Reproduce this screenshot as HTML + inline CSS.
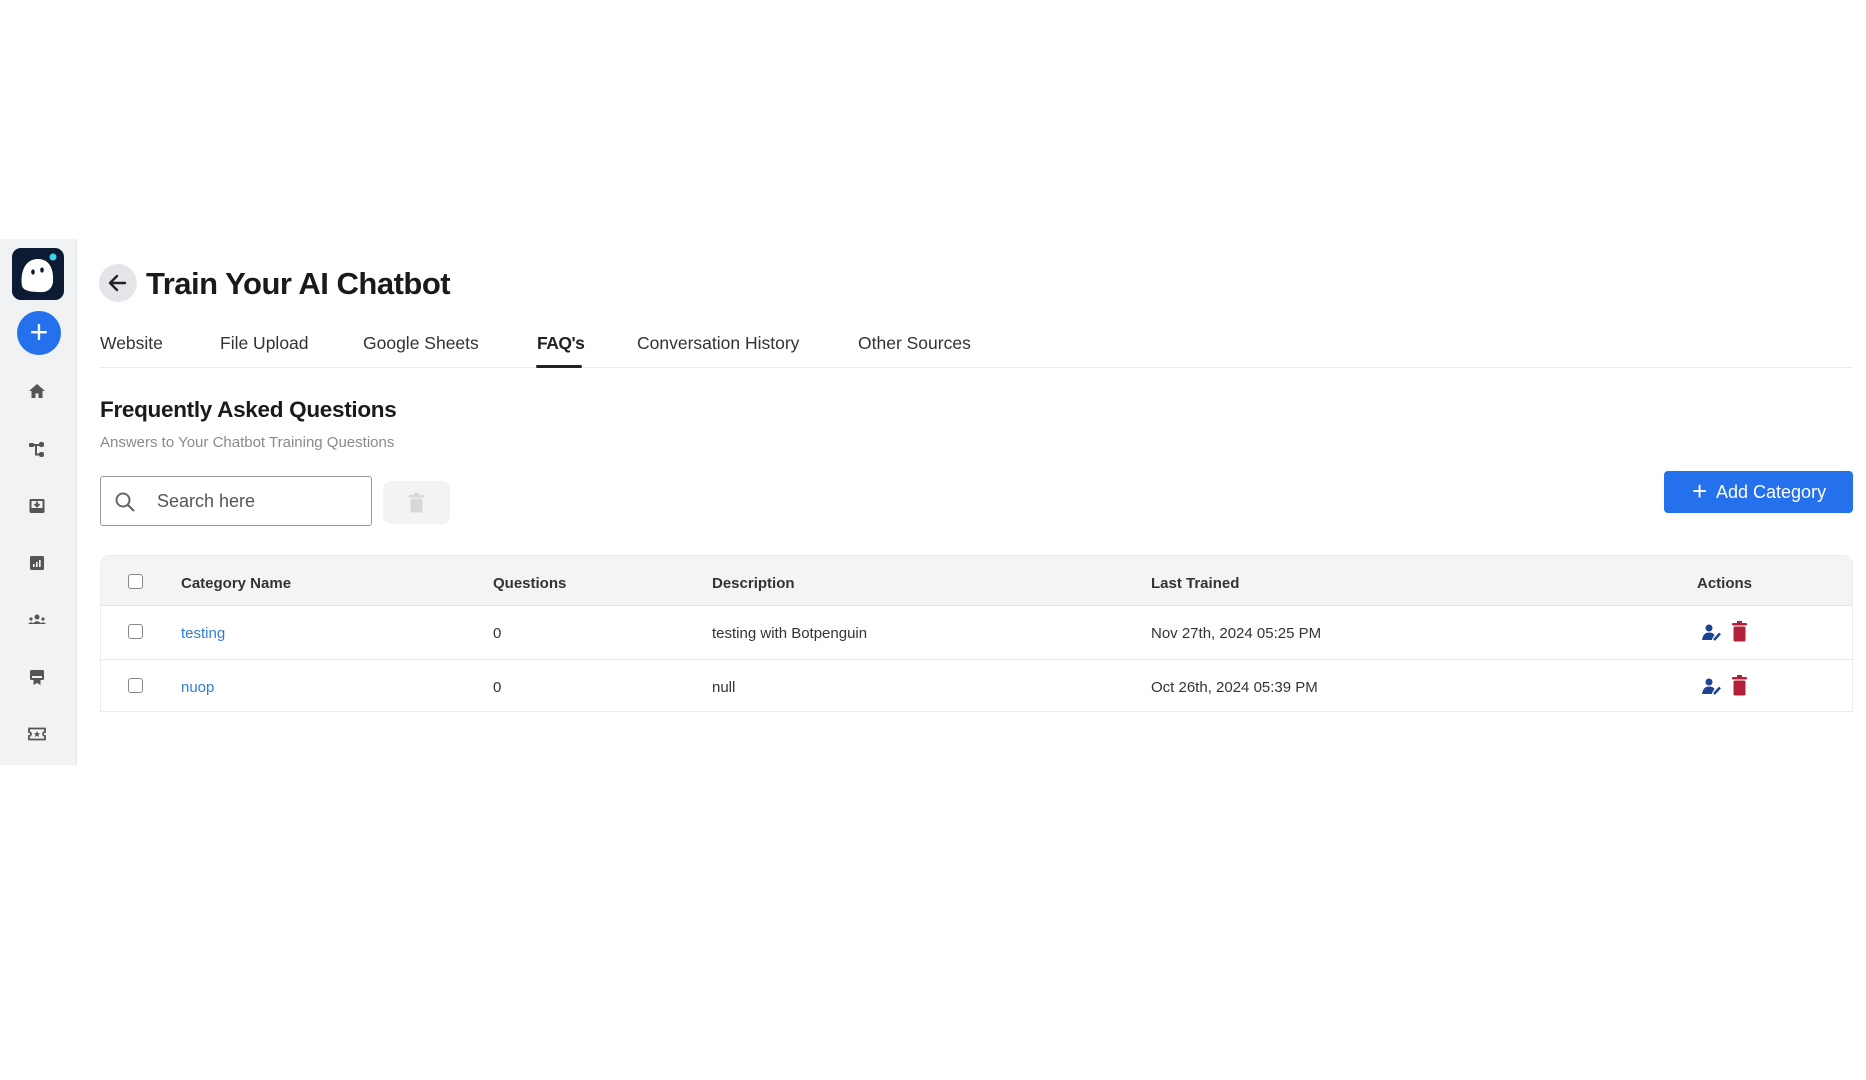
<!DOCTYPE html>
<html><head><meta charset="utf-8"><style>
*{box-sizing:border-box;margin:0;padding:0}
body{width:1866px;height:1080px;background:#fff;font-family:"Liberation Sans",sans-serif;color:#222;position:relative;overflow:hidden}
.abs{position:absolute}
.side{left:0;top:239px;width:77px;height:526px;background:#f1f2f4;border-right:1px solid #e6e7ea}
.ic{position:absolute;left:27px;width:20px;height:20px}
.tab{position:absolute;top:333px;font-size:17.5px;color:#333}
.th{position:absolute;font-size:15px;font-weight:bold;color:#333}
.td{position:absolute;font-size:15px;color:#333}
.cb{position:absolute;left:128px;width:15px;height:15px;border:1.5px solid #888;border-radius:3px;background:#fff}
</style></head><body>
<div class="abs side">
  <div class="abs" style="left:12px;top:9px;width:52px;height:52px;background:#0c1a33;border-radius:9px">
    <svg width="52" height="52" viewBox="0 0 52 52"><path d="M10 38 C8 24 13 11 26 11 C38 11 42 22 41 34 C40 42 34 45 26 44 C17 44 11 42 10 38Z" fill="#fff"/><ellipse cx="21" cy="24" rx="1.8" ry="2.6" fill="#0c1a33"/><ellipse cx="30" cy="22" rx="1.8" ry="2.6" fill="#0c1a33"/><circle cx="41" cy="9" r="3.5" fill="#3ad3e8"/></svg>
  </div>
  <div class="abs" style="left:17px;top:72px;width:44px;height:44px;border-radius:50%;background:#2470ed;color:#fff;font-size:32px;line-height:42px;text-align:center">+</div>
  <svg class="ic" style="top:142px" viewBox="0 0 20 20"><path d="M10 3 L2 10 H4.5 V17 H8.5 V12.5 H11.5 V17 H15.5 V10 H18 Z" fill="#555"/></svg>
  <svg class="ic" style="top:200px" viewBox="0 0 20 20"><rect x="2" y="4" width="5" height="4" rx="1" fill="#555"/><rect x="12" y="3" width="5" height="5" rx="2" fill="#555"/><rect x="12" y="13" width="5" height="5" rx="2" fill="#555"/><path d="M7 6 H12 M9 6 V15.5 H12" stroke="#555" stroke-width="2" fill="none"/></svg>
  <svg class="ic" style="top:257px" viewBox="0 0 20 20"><rect x="2.5" y="3" width="15" height="14" rx="1.5" fill="#555"/><rect x="4.5" y="5" width="11" height="7" fill="#f1f2f4"/><path d="M10 5.5 V10 M7.5 8 L10 10.5 L12.5 8" stroke="#555" stroke-width="1.8" fill="none"/></svg>
  <svg class="ic" style="top:314px" viewBox="0 0 20 20"><rect x="3" y="3" width="14" height="14" rx="1.5" fill="#555"/><rect x="6" y="11" width="1.6" height="3" fill="#fff"/><rect x="9" y="9" width="1.6" height="5" fill="#fff"/><rect x="12" y="7" width="1.6" height="7" fill="#fff"/></svg>
  <svg class="ic" style="top:371px" viewBox="0 0 20 20"><circle cx="10" cy="7" r="2.5" fill="#555"/><path d="M5.5 14 Q10 8.5 14.5 14Z" fill="#555"/><circle cx="4" cy="9" r="1.6" fill="#555"/><circle cx="16" cy="9" r="1.6" fill="#555"/><path d="M1 14 Q4 10.5 7 14Z M13 14 Q16 10.5 19 14Z" fill="#555"/></svg>
  <svg class="ic" style="top:428px" viewBox="0 0 20 20"><rect x="3" y="3" width="14" height="10" rx="1.5" fill="#555"/><rect x="5" y="9" width="10" height="2" fill="#f1f2f4"/><path d="M6.5 13 V18 L10 16 L13.5 18 V13Z" fill="#555"/></svg>
  <svg class="ic" style="top:485px" viewBox="0 0 20 20"><path d="M2 4.5 H18 V8 A2 2 0 0 0 18 12 V15.5 H2 V12 A2 2 0 0 0 2 8Z" fill="none" stroke="#555" stroke-width="1.8"/><path d="M10 7 L11 9.2 L13.2 9.4 L11.5 10.8 L12 13 L10 11.8 L8 13 L8.5 10.8 L6.8 9.4 L9 9.2Z" fill="#555"/></svg>
</div>

<div class="abs" style="left:99px;top:264px;width:38px;height:38px;border-radius:50%;background:#e4e5e8">
  <svg width="38" height="38" viewBox="0 0 38 38"><path d="M26 19 H12 M18 12 L11 19 L18 26" stroke="#222" stroke-width="2.4" fill="none" stroke-linecap="round" stroke-linejoin="round"/></svg>
</div>
<div class="abs" style="left:146px;top:265px;font-size:31px;font-weight:bold;color:#1a1a1a;line-height:38px;letter-spacing:-0.5px">Train Your AI Chatbot</div>

<div class="tab" style="left:100px">Website</div>
<div class="tab" style="left:220px">File Upload</div>
<div class="tab" style="left:363px">Google Sheets</div>
<div class="tab" style="left:537px;font-weight:bold;color:#222;letter-spacing:-0.5px">FAQ's</div>
<div class="tab" style="left:637px">Conversation History</div>
<div class="tab" style="left:858px">Other Sources</div>
<div class="abs" style="left:100px;top:367px;width:1753px;height:1px;background:#ececec"></div>
<div class="abs" style="left:536px;top:365px;width:46px;height:3px;background:#222;border-radius:2px"></div>

<div class="abs" style="left:100px;top:397px;font-size:22.5px;font-weight:bold;color:#1a1a1a;letter-spacing:-0.3px">Frequently Asked Questions</div>
<div class="abs" style="left:100px;top:434px;font-size:15px;color:#8a8a8a">Answers to Your Chatbot Training Questions</div>

<div class="abs" style="left:100px;top:476px;width:272px;height:50px;border:1px solid #999;border-radius:3px">
  <svg class="abs" style="left:13px;top:14px" width="22" height="22" viewBox="0 0 22 22"><circle cx="9" cy="9" r="6.5" stroke="#666" stroke-width="2" fill="none"/><path d="M14 14 L20 20" stroke="#666" stroke-width="2.2"/></svg>
  <div class="abs" style="left:56px;top:14px;font-size:18px;color:#555">Search here</div>
</div>
<div class="abs" style="left:383px;top:481px;width:67px;height:43px;background:#f3f3f4;border-radius:8px">
  <svg class="abs" style="left:26px;top:12px" width="15" height="20" viewBox="0 0 15 20"><rect x="0" y="2" width="15" height="2.5" fill="#d8d8da"/><rect x="5" y="0" width="5" height="2" fill="#d8d8da"/><rect x="1.5" y="5.5" width="12" height="14" rx="1.5" fill="#d8d8da"/></svg>
</div>

<div class="abs" style="left:1664px;top:471px;width:189px;height:42px;background:#2470ed;border-radius:4px;color:#fff;font-size:18px;line-height:42px;padding-left:28px">
  <span style="position:absolute;left:28px;top:-1px;font-size:26px">+</span><span style="margin-left:24px">Add Category</span>
</div>

<div class="abs" style="left:100px;top:555px;width:1753px;height:157px;border:1px solid #ececec;border-radius:10px 10px 0 0;overflow:hidden">
  <div class="abs" style="left:0;top:0;width:100%;height:50px;background:#f4f4f4;border-bottom:1px solid #e6e6e6"></div>
  <div class="abs" style="left:0;top:103px;width:100%;height:1px;background:#e6e6e6"></div>
</div>
<div class="cb" style="top:574px"></div>
<div class="cb" style="top:624px"></div>
<div class="cb" style="top:678px"></div>
<div class="th" style="left:181px;top:575px">Category Name</div>
<div class="th" style="left:493px;top:575px">Questions</div>
<div class="th" style="left:712px;top:575px">Description</div>
<div class="th" style="left:1151px;top:575px">Last Trained</div>
<div class="th" style="left:1697px;top:575px">Actions</div>

<div class="td" style="left:181px;top:625px;color:#2f7fd8">testing</div>
<div class="td" style="left:493px;top:625px">0</div>
<div class="td" style="left:712px;top:625px">testing with Botpenguin</div>
<div class="td" style="left:1151px;top:625px">Nov 27th, 2024 05:25 PM</div>
<div class="td" style="left:181px;top:679px;color:#2f7fd8">nuop</div>
<div class="td" style="left:493px;top:679px">0</div>
<div class="td" style="left:712px;top:679px">null</div>
<div class="td" style="left:1151px;top:679px">Oct 26th, 2024 05:39 PM</div>

<svg class="abs" style="left:1702px;top:624px" width="20" height="18" viewBox="0 0 20 18"><circle cx="7" cy="4" r="3.5" fill="#1d4394"/><path d="M0 16 Q1 8.5 7 8.5 Q11 8.5 12.5 11 L10 15 V16Z" fill="#1d4394"/><path d="M12 16 L18 9.5" stroke="#1d4394" stroke-width="2.5"/></svg>
<svg class="abs" style="left:1732px;top:621px" width="15" height="21" viewBox="0 0 15 21"><rect x="0" y="2" width="15" height="2.5" rx="1" fill="#b3203a"/><rect x="5" y="0" width="5" height="2" fill="#b3203a"/><rect x="1.5" y="5.5" width="12" height="15" rx="1.5" fill="#b3203a"/></svg>
<svg class="abs" style="left:1702px;top:678px" width="20" height="18" viewBox="0 0 20 18"><circle cx="7" cy="4" r="3.5" fill="#1d4394"/><path d="M0 16 Q1 8.5 7 8.5 Q11 8.5 12.5 11 L10 15 V16Z" fill="#1d4394"/><path d="M12 16 L18 9.5" stroke="#1d4394" stroke-width="2.5"/></svg>
<svg class="abs" style="left:1732px;top:675px" width="15" height="21" viewBox="0 0 15 21"><rect x="0" y="2" width="15" height="2.5" rx="1" fill="#b3203a"/><rect x="5" y="0" width="5" height="2" fill="#b3203a"/><rect x="1.5" y="5.5" width="12" height="15" rx="1.5" fill="#b3203a"/></svg>
</body></html>
